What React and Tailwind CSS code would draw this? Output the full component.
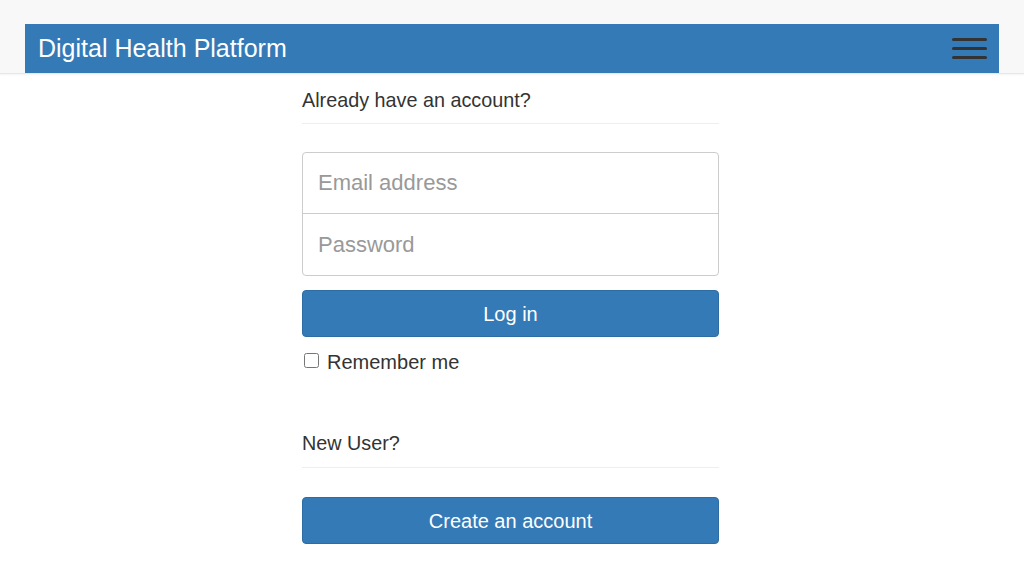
import React, { useState } from 'react';

const App = () => {
  const [remember, setRemember] = useState(false);

  return (
    <div className="min-h-[576px] bg-white text-[#333]" style={{ fontFamily: '"Liberation Sans", Arial, sans-serif' }}>
      {/* Navbar */}
      <div className="h-[74px] bg-[#f8f8f8] border-b border-[#e7e7e7] pt-6 px-[25px] shadow-[0_1px_2px_rgba(0,0,0,0.05)]">
        <div className="h-[49px] bg-[#337ab7] flex items-center justify-between pl-[13px] pr-[12px]">
          <span className="text-white text-[25px] leading-none">Digital Health Platform</span>
          <button className="flex flex-col gap-[6px] w-[35px] py-1">
            <span className="block h-[3px] bg-[#333] rounded-sm" />
            <span className="block h-[3px] bg-[#333] rounded-sm" />
            <span className="block h-[3px] bg-[#333] rounded-sm" />
          </button>
        </div>
      </div>

      {/* Login form */}
      <div className="w-[417px] ml-[302px] pt-[15px]">
        <h3 className="text-[19.8px] leading-[22px] pb-[12px] border-b border-[#eee]">Already have an account?</h3>

        <div className="mt-[28px] border border-[#ccc] rounded-[4px] flex flex-col">
          <input
            type="email"
            placeholder="Email address"
            className="h-[61px] px-[15px] text-[22px] placeholder-[#999] outline-none rounded-t-[4px] border-b border-[#ccc]"
          />
          <input
            type="password"
            placeholder="Password"
            className="h-[61px] px-[15px] text-[22px] placeholder-[#999] outline-none rounded-b-[4px]"
          />
        </div>

        <button className="mt-[14px] w-full h-[47px] bg-[#337ab7] border border-[#2e6da4] rounded-[4px] text-white text-[20px]">
          Log in
        </button>

        <label className="mt-[10px] flex items-center gap-[8px] text-[20px]">
          <input
            type="checkbox"
            checked={remember}
            onChange={(e) => setRemember(e.target.checked)}
            className="w-[15px] h-[15px] ml-[2px] mb-[3px]"
          />
          Remember me
        </label>

        <h3 className="mt-[55px] text-[19.8px] leading-[22px] pb-[13px] border-b border-[#eee]">New User?</h3>

        <button className="mt-[29px] w-full h-[47px] bg-[#337ab7] border border-[#2e6da4] rounded-[4px] text-white text-[20px]">
          Create an account
        </button>
      </div>
    </div>
  );
};

export default App;
